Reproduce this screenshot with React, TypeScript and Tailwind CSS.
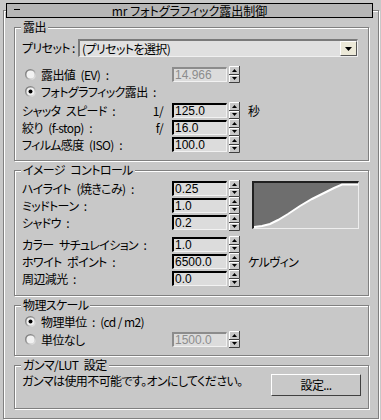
import React from "react";

const ETCH = "border border-[#808080] shadow-[1px_1px_0_#ffffff,inset_1px_1px_0_#ffffff]";
const S = "\u2002";

function Spinner() {
  return (
    <svg width="11" height="17" viewBox="0 0 11 17" className="block shrink-0">
      <rect x="0" y="0" width="11" height="17" fill="#c8c8c8" />
      <path d="M0.5 8V0.5H10" stroke="#ffffff" fill="none" />
      <path d="M0.5 16.5V9.5H10" stroke="#ffffff" fill="none" />
      <path d="M0 8.5H10.5V0" stroke="#404040" fill="none" />
      <path d="M0 16.5H10.5V9" stroke="#404040" fill="none" />
      <polygon points="3,6 8,6 5.5,3" fill="#000000" />
      <polygon points="3,11 8,11 5.5,14" fill="#000000" />
    </svg>
  );
}

function Radio({ checked }: { checked?: boolean }) {
  return (
    <svg width="11" height="11" viewBox="0 0 11 11" className="block shrink-0">
      <defs>
        <linearGradient id="rg" x1="0" y1="0" x2="1" y2="1">
          <stop offset="0" stopColor="#6a6a6a" />
          <stop offset="0.5" stopColor="#a0a0a0" />
          <stop offset="1" stopColor="#ffffff" />
        </linearGradient>
      </defs>
      <circle cx="5.5" cy="5.5" r="5.5" fill="url(#rg)" />
      <circle cx="5.5" cy="5.5" r="4" fill="#f2f2f2" />
      {checked && <circle cx="5.5" cy="5.5" r="2" fill="#000000" />}
    </svg>
  );
}

function Field({ v, disabled }: { v: string; disabled?: boolean }) {
  return (
    <div
      className={`w-[55px] h-[15px] border-t-2 border-l-2 border-r border-b border-r-[#f2f2f2] border-b-[#f2f2f2] bg-[#dcdcdc] pl-[1px] font-['Liberation_Sans',sans-serif] text-[12px] leading-[12px] tracking-normal shrink-0 ${
        disabled ? "border-t-[#8c8c8c] border-l-[#8c8c8c] text-[#8c8c8c]" : "border-t-black border-l-black text-black"
      }`}
    >
      {v}
    </div>
  );
}

function Row({
  label,
  prefix,
  value,
  disabled,
  unit,
  radio,
  checked,
  mt,
}: {
  label: string;
  prefix?: string;
  value?: string;
  disabled?: boolean;
  unit?: string;
  radio?: boolean;
  checked?: boolean;
  mt?: string;
}) {
  return (
    <div className={`flex items-center h-[17px] pl-[7px] ${mt ?? ""}`}>
      <div className="w-[150px] flex items-center shrink-0">
        {radio && (
          <div className="ml-[3px] mr-[5px]">
            <Radio checked={checked} />
          </div>
        )}
        <span className="whitespace-pre">{label}</span>
        {prefix && <span className="ml-auto mr-[9px]">{prefix}</span>}
      </div>
      {value !== undefined && (
        <>
          <Field v={value} disabled={disabled} />
          <div className="ml-[2px]">
            <Spinner />
          </div>
        </>
      )}
      {unit && <span className="ml-[8px] whitespace-nowrap">{unit}</span>}
    </div>
  );
}

function Group({ title, h, children }: { title: string; h: string; children: React.ReactNode }) {
  return (
    <div className={`ml-[10px] mt-[9px] w-[355px] ${h} relative ${ETCH}`}>
      <span className="absolute left-[6px] top-[-8px] px-[2px] bg-[#c8c8c8] leading-[14px] whitespace-pre">
        {title}
      </span>
      {children}
    </div>
  );
}

function Curve() {
  const pts: [number, number][] = [
    [0, 44],
    [8, 43],
    [16, 41],
    [24, 37],
    [34, 31],
    [46, 23],
    [58, 16],
    [70, 10],
    [80, 5],
    [88, 1.5],
    [105, 1.5],
  ];
  const line = pts.map((p) => p.join(",")).join(" ");
  const poly = "0,0 105,0 " + [...pts].reverse().map((p) => p.join(",")).join(" ");
  return (
    <div className="w-[107px] h-[48px] border-t-2 border-l-2 border-t-[#202020] border-l-[#202020] border-r border-b border-r-[#eeeeee] border-b-[#eeeeee] bg-[#c8c8c8] shrink-0">
      <svg width="104" height="45" viewBox="0 0 104 45" className="block">
        <polygon points={poly} fill="#6e6e6e" />
        <polyline points={line} fill="none" stroke="#ffffff" strokeWidth="2" />
      </svg>
    </div>
  );
}

export default function App() {
  return (
    <div className="w-[381px] h-[420px] bg-[#c8c8c8] pt-[10px] pl-[3px] text-[12px] leading-[14px] tracking-[-0.6px] text-black font-['Noto_Sans_CJK_JP','Noto_Sans_CJK_SC',sans-serif] [font-feature-settings:'palt'] overflow-hidden">
      <div className={`w-[376px] h-[409px] ${ETCH}`}>
        {/* title bar */}
        <div className="mt-[-8px] ml-[2px] w-[367px] h-[15px] border border-black bg-[#b6b6b6] relative flex items-center justify-center">
          <div className="absolute left-[7px] top-[5px] w-[6px] h-px bg-black" />
          <span className="leading-[13px] tracking-normal whitespace-nowrap">mr フォトグラフィック露出制御</span>
        </div>

        <div className="mt-[1px]">
          <Group title="露出" h="h-[134px]">
            <div className="flex items-center h-[18px] mt-[11px] pl-[7px]">
              <span className="w-[56px] shrink-0 whitespace-pre">プリセット :</span>
              <div className="w-[280px] h-[18px] flex border-t-2 border-l-2 border-t-[#7a7a7a] border-l-[#7a7a7a] border-r border-b border-r-[#f0f0f0] border-b-[#f0f0f0] bg-[#e0e0e0]">
                <span className="flex-1 pl-[2px] leading-[15px] whitespace-nowrap">(プリセットを選択)</span>
                <div className="w-[17px] h-[15px] bg-[#ece9d8] border-t border-l border-t-white border-l-white border-r border-b border-r-[#555555] border-b-[#555555] flex items-center justify-center">
                  <svg width="7" height="4" viewBox="0 0 7 4" className="block">
                    <polygon points="0,0 7,0 3.5,4" fill="#000000" />
                  </svg>
                </div>
              </div>
            </div>
            <Row mt="mt-[9px]" radio label={`露出値${S}(EV)${S}:`} value="14.966" disabled />
            <Row radio checked label={`フォトグラフィック露出${S}:`} />
            <Row mt="mt-[2px]" label={`シャッタ${S}スピード${S}:`} prefix="1/" value="125.0" unit="秒" />
            <Row label={`絞り${S}(f-stop)${S}:`} prefix="f/" value="16.0" />
            <Row label={`フィルム感度${S}(ISO)${S}:`} value="100.0" />
          </Group>

          <Group title={`イメージ${S}コントロール`} h="h-[126px]">
            <div className="flex mt-[9px]">
              <div className="flex flex-col">
                <Row label={`ハイライト${S}(焼きこみ)${S}:`} value="0.25" />
                <Row label={`ミッドトーン${S}:`} value="1.0" />
                <Row label={`シャドウ${S}:`} value="0.2" />
              </div>
              <div className="ml-[12px] mt-[1px]">
                <Curve />
              </div>
            </div>
            <Row mt="mt-[5px]" label={`カラー${S}サチュレイション${S}:`} value="1.0" />
            <Row label={`ホワイト${S}ポイント${S}:`} value="6500.0" unit="ケルヴィン" />
            <Row label={`周辺減光${S}:`} value="0.0" />
          </Group>

          <Group title="物理スケール" h="h-[51px]">
            <Row mt="mt-[7px]" radio checked label={`物理単位${S}:${S}(cd / m2)`} />
            <Row mt="mt-[1px]" radio label="単位なし" value="1500.0" disabled />
          </Group>

          <Group title={`ガンマ/LUT${S}設定`} h="h-[44px]">
            <div className="flex items-start pt-[8px]">
              <span className="pl-[7px] leading-[14px] whitespace-nowrap">ガンマは使用不可能です。オンにしてください。</span>
              <div className="ml-auto mr-[7px] w-[90px] h-[22px] border-t border-l border-t-white border-l-white border-r border-b border-r-[#404040] border-b-[#404040] bg-[#c8c8c8] flex items-center justify-center">
                <span className="leading-[14px]">設定...</span>
              </div>
            </div>
          </Group>
        </div>
      </div>
    </div>
  );
}
